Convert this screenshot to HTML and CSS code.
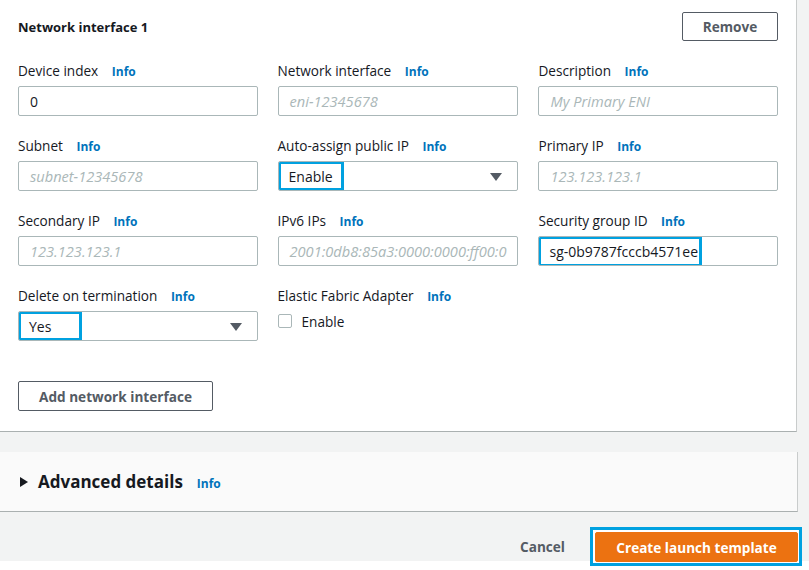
FILE: index.html
```html
<!DOCTYPE html>
<html>
<head>
<meta charset="utf-8">
<link rel="stylesheet" href="styles.css">
</head>
<body>
<div class="page">
  <section class="panel">
    <div class="panel-head">
      <h2 class="title">Network interface 1</h2>
      <button class="btn">Remove</button>
    </div>
    <div class="grid">
      <div class="field">
        <div class="label">Device index <a class="info">Info</a></div>
        <div class="input"><span class="value">0</span></div>
      </div>
      <div class="field">
        <div class="label">Network interface <a class="info">Info</a></div>
        <div class="input"><span class="ph">eni-12345678</span></div>
      </div>
      <div class="field">
        <div class="label">Description <a class="info">Info</a></div>
        <div class="input"><span class="ph">My Primary ENI</span></div>
      </div>

      <div class="field">
        <div class="label">Subnet <a class="info">Info</a></div>
        <div class="input"><span class="ph">subnet-12345678</span></div>
      </div>
      <div class="field">
        <div class="label">Auto-assign public IP <a class="info">Info</a></div>
        <div class="input select"><span class="hl hl-enable">Enable</span><span class="caret"></span></div>
      </div>
      <div class="field">
        <div class="label">Primary IP <a class="info">Info</a></div>
        <div class="input"><span class="ph">123.123.123.1</span></div>
      </div>

      <div class="field">
        <div class="label">Secondary IP <a class="info">Info</a></div>
        <div class="input"><span class="ph">123.123.123.1</span></div>
      </div>
      <div class="field">
        <div class="label">IPv6 IPs <a class="info">Info</a></div>
        <div class="input"><span class="ph">2001:0db8:85a3:0000:0000:ff00:0</span></div>
      </div>
      <div class="field">
        <div class="label">Security group ID <a class="info">Info</a></div>
        <div class="input"><span class="hl hl-sg">sg-0b9787fcccb4571ee</span></div>
      </div>

      <div class="field">
        <div class="label">Delete on termination <a class="info">Info</a></div>
        <div class="input select"><span class="hl hl-yes">Yes</span><span class="caret"></span></div>
      </div>
      <div class="field">
        <div class="label">Elastic Fabric Adapter <a class="info">Info</a></div>
        <label class="check"><span class="box"></span>Enable</label>
      </div>
      <div class="field"></div>
    </div>
    <div class="add-row">
      <button class="btn btn-add">Add network interface</button>
    </div>
  </section>

  <section class="adv">
    <span class="tri"></span>
    <span class="adv-title">Advanced details</span>
    <a class="info">Info</a>
  </section>

  <div class="footer">
    <button class="link-btn">Cancel</button>
    <span class="ring"><button class="primary">Create launch template</button></span>
  </div>
</div>
</body>
</html>
```

FILE: styles.css
```css
* { box-sizing: border-box; }
html, body { margin: 0; padding: 0; }
body {
  background: #ffffff;
  font-family: "Open Sans", "Noto Sans", Arial, sans-serif;
  color: #16191f;
  font-size: 13.6px;
  min-height: 570px;
}
.page {
  background: #f2f3f3;
  height: 561px;
}
.panel {
  width: 797px;
  height: 432px;
  background: #ffffff;
  border-right: 1px solid #c9cccc;
  border-bottom: 1px solid #aab0b0;
  padding: 12px 18px 0 18px;
  display: flex;
  flex-direction: column;
}
.panel-head {
  display: flex;
  justify-content: space-between;
  align-items: center;
  height: 29px;
}
.title {
  margin: 0;
  font-size: 13px;
  font-weight: 700;
  color: #16191f;
}
.btn {
  font-family: inherit;
  font-size: 13.6px;
  font-weight: 700;
  color: #545b64;
  background: #ffffff;
  border: 1px solid #545b64;
  border-radius: 2px;
  height: 29px;
  padding: 0;
  width: 96px;
}
.grid {
  margin-top: 20px;
  display: grid;
  grid-template-columns: repeat(3, 1fr);
  column-gap: 20px;
  row-gap: 20px;
}
.label {
  height: 20px;
  line-height: 20px;
  margin-bottom: 5px;
  font-size: 13.6px;
  color: #16191f;
  white-space: nowrap;
}
.info {
  color: #0073bb;
  font-weight: 700;
  font-size: 12px;
  margin-left: 10px;
}
.input {
  position: relative;
  height: 30px;
  border: 1px solid #aab7b8;
  border-radius: 2px;
  display: flex;
  align-items: center;
  padding: 0 11px;
  font-size: 14px;
  overflow: hidden;
  white-space: nowrap;
}
.value { color: #16191f; }
.ph {
  color: #aab7b8;
  font-style: italic;
  font-size: 14.6px;
}
.select { padding-right: 16px; }
.caret {
  position: absolute;
  right: 15px;
  top: 11px;
  width: 0;
  height: 0;
  border-left: 6px solid transparent;
  border-right: 6px solid transparent;
  border-top: 8px solid #545b64;
}
.hl {
  position: absolute;
  top: -1px;
  left: -1px;
  height: 30px;
  border: 3px solid #00a1e0;
  display: flex;
  align-items: center;
  padding-left: 8px;
  color: #16191f;
  background: #fff;
}
.hl-enable { width: 66px; }
.hl-yes { width: 64px; }
.hl-sg { width: 164px; height: 31px; padding-left: 8px; }
.check {
  display: flex;
  align-items: center;
  height: 20px;
  margin-top: 3px;
  font-size: 13.6px;
  color: #16191f;
}
.box {
  width: 14px;
  height: 14px;
  border: 1px solid #aab7b8;
  border-radius: 2px;
  margin-right: 10px;
}
.add-row {
  margin-top: 40px;
}
.btn-add {
  width: 195px;
  height: 30px;
}
.adv {
  margin-top: 20px;
  width: 798px;
  height: 60px;
  background: #fafafa;
  border-right: 1px solid #c9cccc;
  border-bottom: 1px solid #aab0b0;
  display: flex;
  align-items: center;
  padding-left: 20px;
}
.tri {
  width: 0;
  height: 0;
  border-top: 5px solid transparent;
  border-bottom: 5px solid transparent;
  border-left: 8px solid #16191f;
  margin-right: 10px;
}
.adv-title {
  font-size: 17px;
  font-weight: 700;
  color: #16191f;
}
.adv .info {
  margin-left: 14px;
  margin-top: 3px;
}
.footer {
  display: flex;
  justify-content: flex-end;
  align-items: center;
  padding-right: 7px;
  margin-top: 15px;
}
.link-btn {
  font-family: inherit;
  font-size: 13.6px;
  font-weight: 700;
  color: #545b64;
  background: none;
  border: none;
  padding: 0;
  margin-right: 25px;
}
.ring {
  display: flex;
  border: 3px solid #00a1e0;
  padding: 2px 1px 1px 2px;
  background: #ffffff;
}
.primary {
  font-family: inherit;
  font-size: 13.6px;
  font-weight: 700;
  color: #ffffff;
  background: #ec7211;
  border: 1px solid #ec7211;
  border-radius: 2px;
  width: 203px;
  height: 30px;
  padding: 0;
}
```
